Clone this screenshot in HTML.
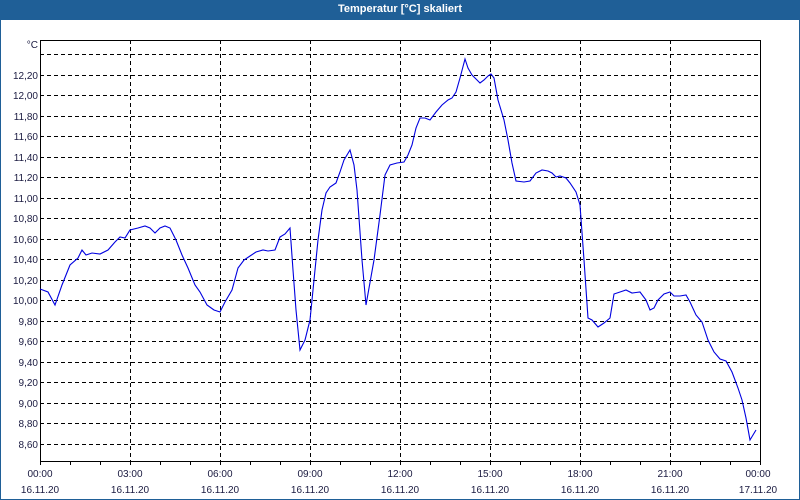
<!DOCTYPE html>
<html><head><meta charset="utf-8"><style>
html,body{margin:0;padding:0;background:#fff}
body{width:800px;height:500px;position:relative;overflow:hidden;font-family:"Liberation Sans",sans-serif}
.title{position:absolute;left:0;top:0;width:800px;height:20px;background:#1f5f97;color:#fff;font-weight:bold;font-size:11px;text-align:center;line-height:19px}
.frame{position:absolute;left:0;top:20px;width:798px;height:479px;border:1px solid #1f5f97;border-top:none}
</style></head><body>
<div class="title">Temperatur [°C] skaliert</div>
<div class="frame"></div>
<svg width="800" height="500" style="position:absolute;left:0;top:0" font-family="'Liberation Sans', sans-serif" font-size="10" fill="#1a1a40">
<g stroke="#000" stroke-width="1" stroke-dasharray="4,3" shape-rendering="crispEdges">
<line x1="40" x2="760" y1="54.5" y2="54.5"/>
<line x1="40" x2="760" y1="75.5" y2="75.5"/><line x1="40" x2="760" y1="95.5" y2="95.5"/><line x1="40" x2="760" y1="116.5" y2="116.5"/><line x1="40" x2="760" y1="136.5" y2="136.5"/><line x1="40" x2="760" y1="157.5" y2="157.5"/><line x1="40" x2="760" y1="177.5" y2="177.5"/><line x1="40" x2="760" y1="198.5" y2="198.5"/><line x1="40" x2="760" y1="218.5" y2="218.5"/><line x1="40" x2="760" y1="239.5" y2="239.5"/><line x1="40" x2="760" y1="259.5" y2="259.5"/><line x1="40" x2="760" y1="280.5" y2="280.5"/><line x1="40" x2="760" y1="300.5" y2="300.5"/><line x1="40" x2="760" y1="321.5" y2="321.5"/><line x1="40" x2="760" y1="341.5" y2="341.5"/><line x1="40" x2="760" y1="362.5" y2="362.5"/><line x1="40" x2="760" y1="382.5" y2="382.5"/><line x1="40" x2="760" y1="403.5" y2="403.5"/><line x1="40" x2="760" y1="423.5" y2="423.5"/><line x1="40" x2="760" y1="444.5" y2="444.5"/>
<line y1="40" y2="461" x1="130.5" x2="130.5"/><line y1="40" y2="461" x1="220.5" x2="220.5"/><line y1="40" y2="461" x1="310.5" x2="310.5"/><line y1="40" y2="461" x1="400.5" x2="400.5"/><line y1="40" y2="461" x1="490.5" x2="490.5"/><line y1="40" y2="461" x1="580.5" x2="580.5"/><line y1="40" y2="461" x1="670.5" x2="670.5"/>
</g>
<rect x="40.5" y="40.5" width="720" height="421" fill="none" stroke="#000" shape-rendering="crispEdges"/>
<g stroke="#000" shape-rendering="crispEdges">
<path d="M40.5 461v4M70.5 461v4M100.5 461v4M130.5 461v4M160.5 461v4M190.5 461v4M220.5 461v4M250.5 461v4M280.5 461v4M310.5 461v4M340.5 461v4M370.5 461v4M400.5 461v4M430.5 461v4M460.5 461v4M490.5 461v4M520.5 461v4M550.5 461v4M580.5 461v4M610.5 461v4M640.5 461v4M670.5 461v4M700.5 461v4M730.5 461v4M760.5 461v4"/>
</g>
<polyline fill="none" stroke="#0000e0" stroke-width="1.1" points="40,289 48,292 55,305 62,285 70,265 78,258 82,250 86,255 92,253 100,254 108,250 115,242 120,237 125,238 130,230 138,228 145,226 150,228 155,233 160,228 165,226 170,228 176,240 182,255 188,268 195,285 200,292 207,305 214,310 220,312 225,302 232,290 238,268 244,260 250,256 256,252 263,250 268,251 275,250 280,237 285,234 290,228 293,270 296,310 300,350 305,340 310,320 314,280 318,240 322,210 326,193 330,187 336,183 340,172 344,160 350,150 354,165 357,190 362,260 366,305 374,260 380,215 385,175 390,165 397,163 404,162 408,155 412,145 416,128 420,118 425,118 430,120 436,112 442,105 448,100 452,98 456,92 460,78 465,59 468,68 472,75 476,79 480,83 484,80 488,76 491,74 494,78 498,100 504,120 508,140 512,163 516,181 524,182 530,181 536,173 542,170 548,171 552,173 556,177 560,176 566,178 570,183 576,192 580,205 584,260 588,318 592,320 598,327 604,323 610,318 614,294 620,292 626,290 632,293 640,292 646,300 650,310 654,308 658,300 664,294 670,292 674,296 680,296 686,295 690,302 696,315 702,322 708,340 714,352 720,359 726,361 732,372 738,388 742,400 746,418 750,440 756,430"/>
<g text-anchor="end">
<text x="38" y="48">°C</text>
<text x="38" y="79">12,20</text><text x="38" y="99">12,00</text><text x="38" y="120">11,80</text><text x="38" y="140">11,60</text><text x="38" y="161">11,40</text><text x="38" y="181">11,20</text><text x="38" y="202">11,00</text><text x="38" y="222">10,80</text><text x="38" y="243">10,60</text><text x="38" y="263">10,40</text><text x="38" y="284">10,20</text><text x="38" y="304">10,00</text><text x="38" y="325">9,80</text><text x="38" y="345">9,60</text><text x="38" y="366">9,40</text><text x="38" y="386">9,20</text><text x="38" y="407">9,00</text><text x="38" y="427">8,80</text><text x="38" y="448">8,60</text>
</g>
<g text-anchor="middle">
<text x="40" y="477">00:00</text><text x="130" y="477">03:00</text><text x="220" y="477">06:00</text><text x="310" y="477">09:00</text><text x="400" y="477">12:00</text><text x="490" y="477">15:00</text><text x="580" y="477">18:00</text><text x="670" y="477">21:00</text><text x="758" y="477">00:00</text>
<text x="40" y="493">16.11.20</text><text x="130" y="493">16.11.20</text><text x="220" y="493">16.11.20</text><text x="310" y="493">16.11.20</text><text x="400" y="493">16.11.20</text><text x="490" y="493">16.11.20</text><text x="580" y="493">16.11.20</text><text x="670" y="493">16.11.20</text><text x="758" y="493">17.11.20</text>
</g>
</svg>
</body></html>
